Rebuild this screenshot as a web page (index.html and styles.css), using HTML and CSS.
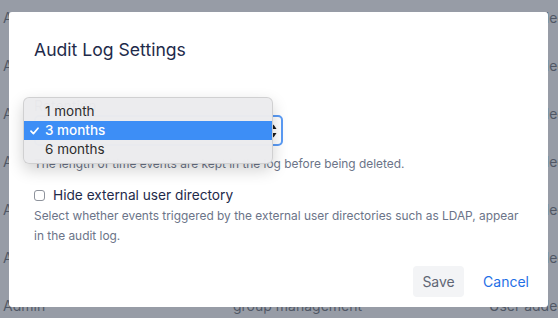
FILE: index.html
```html
<!DOCTYPE html>
<html lang="en">
<head>
<meta charset="utf-8">
<title>Audit Log Settings</title>
<link rel="stylesheet" href="styles.css">
</head>
<body>
<div class="page">
  <div class="log-table">
    <div class="log-row"><span>Admin</span><span>user management</span><span>User added</span></div>
    <div class="log-row"><span>Admin</span><span>user management</span><span>User added</span></div>
    <div class="log-row"><span>Admin</span><span>user management</span><span>User added</span></div>
    <div class="log-row"><span>Admin</span><span>user management</span><span>User added</span></div>
    <div class="log-row"><span>Admin</span><span>user management</span><span>User added</span></div>
    <div class="log-row"><span>Admin</span><span>user management</span><span>User added</span></div>
    <div class="log-row"><span>Admin</span><span>group management</span><span>User added</span></div>
  </div>
</div>

<div class="overlay"></div>

<div class="modal" role="dialog" aria-labelledby="modal-title">
  <div class="modal-body">
    <h2 class="modal-title" id="modal-title">Audit Log Settings</h2>

    <div class="field">
      <label class="field-label">Retention</label>
      <div class="select">
        <span class="select-value">3 months</span>
        <svg class="select-arrows" width="7" height="14" viewBox="0 0 7 14">
          <path d="M3.5 0.5 L6.5 5 L0.5 5 Z" fill="#1a1a1a"/>
          <path d="M3.5 13.5 L6.5 9 L0.5 9 Z" fill="#1a1a1a"/>
        </svg>
      </div>
      <p class="help">The length of time events are kept in the log before being deleted.</p>
    </div>

    <div class="check-field">
      <label class="check-label"><input type="checkbox" class="checkbox"><span>Hide external user directory</span></label>
      <p class="help">Select whether events triggered by the external user directories such as LDAP, appear in the audit log.</p>
    </div>
  </div>
  <div class="modal-footer">
    <button class="btn btn-save">Save</button>
    <button class="btn btn-cancel">Cancel</button>
  </div>

  <ul class="menu">
    <li class="menu-item">1 month</li>
    <li class="menu-item selected"><svg class="tick" width="9" height="8" viewBox="0 0 9 8"><path d="M1 4.2 L3.4 6.6 L8 1.2" fill="none" stroke="#fff" stroke-width="1.7" stroke-linecap="round" stroke-linejoin="round"/></svg>3 months</li>
    <li class="menu-item">6 months</li>
  </ul>
</div>
</body>
</html>
```

FILE: styles.css
```css
* { box-sizing: border-box; }

html, body {
  margin: 0;
  padding: 0;
}

body {
  font-family: "Inter", "Noto Sans", "Liberation Sans", sans-serif;
  background: #ffffff;
  overflow: hidden;
  width: 558px;
  height: 318px;
}

.page {
  height: 318px;
  overflow: hidden;
}

.log-table {
  margin-top: -6px;
}

.log-row {
  display: grid;
  grid-template-columns: 230px 256px 1fr;
  padding-left: 3px;
  height: 48px;
  line-height: 48px;
  font-size: 14px;
  color: #111827;
  white-space: nowrap;
}

.overlay {
  position: fixed;
  inset: 0;
  background: rgba(107, 114, 128, 0.7);
}

.modal {
  position: fixed;
  left: 9px;
  top: 12px;
  width: 539px;
  background: #ffffff;
  border-radius: 3px;
}

.modal-body {
  padding: 24px 25px 0 25px;
}

.modal-title {
  margin: 0;
  font-size: 17.6px;
  line-height: 28px;
  font-weight: 400;
  color: #1e2a4a;
}

.field {
  margin-top: 33px;
}

.field-label {
  display: block;
  font-size: 14px;
  line-height: 18px;
  color: #1e2a4a;
}

.select {
  width: 249px;
  height: 31px;
  border: 2px solid #5b9cf6;
  border-radius: 5px;
  display: flex;
  align-items: center;
  justify-content: space-between;
  padding: 0 4px 0 10px;
  font-size: 14px;
  color: #1e2a4a;
}

.select-arrows {
  display: block;
}

.help {
  margin: 0;
  font-size: 11.9px;
  line-height: 20px;
  color: #6b7488;
}

.field .help {
  margin-top: 8px;
}

.check-field {
  margin-top: 11px;
}

.check-label {
  display: flex;
  align-items: center;
  font-size: 13.7px;
  line-height: 20px;
  color: #1e2a4a;
}

.checkbox {
  appearance: none;
  -webkit-appearance: none;
  width: 11px;
  height: 11px;
  margin: 0 8px 0 0;
  border: 1px solid #8e939c;
  border-radius: 3px;
  background: #ffffff;
}

.check-field .help {
  margin-top: 1px;
}

.modal-footer {
  display: flex;
  justify-content: flex-end;
  align-items: center;
  gap: 19px;
  padding: 20px 19px 10px 25px;
}

.btn {
  font-family: inherit;
  font-size: 14px;
  height: 31px;
  border: none;
  border-radius: 4px;
  padding: 0;
  cursor: pointer;
}

.btn-save {
  width: 51px;
  background: #f3f4f6;
  color: #5f6675;
}

.btn-cancel {
  background: transparent;
  color: #1f6fe6;
}

.menu {
  position: absolute;
  left: 14px;
  top: 85px;
  width: 250px;
  margin: 0;
  padding: 4px 0;
  list-style: none;
  background: rgba(236, 236, 238, 0.98);
  border: 1px solid rgba(0, 0, 0, 0.12);
  border-radius: 6px;
  box-shadow: 0 6px 16px rgba(0, 0, 0, 0.18);
  font-size: 13.5px;
  color: #2c2c2c;
}

.menu-item {
  height: 19px;
  line-height: 19px;
  padding-left: 21px;
  position: relative;
}

.menu-item.selected {
  background: #3d8ef6;
  color: #ffffff;
  font-weight: 500;
}

.tick {
  position: absolute;
  left: 6px;
  top: 6px;
}
```
